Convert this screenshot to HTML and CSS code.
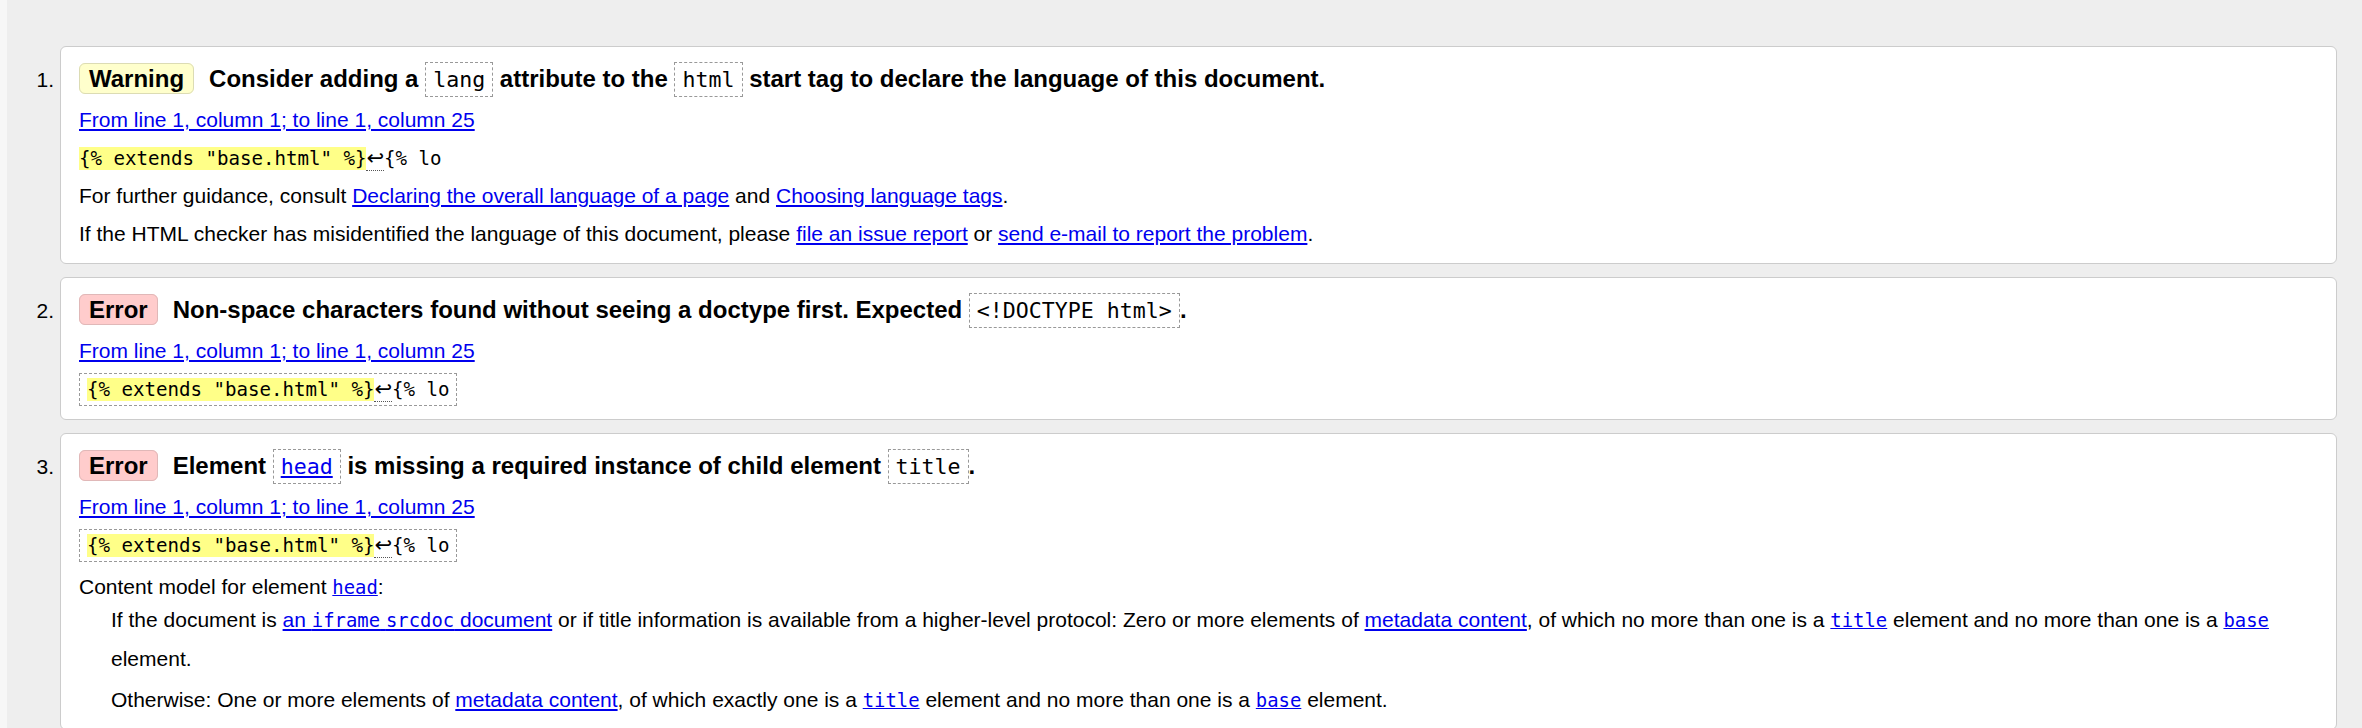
FILE: index.html
```html
<!DOCTYPE html>
<html lang="en">
<head>
<meta charset="utf-8">
<title>Messages</title>
<link rel="stylesheet" href="styles.css">
</head>
<body>
<div class="messages">
  <div class="msg">
    <span class="num">1.</span>
    <div class="card">
      <p class="head"><strong class="badge warn">Warning</strong><span>Consider adding a <code class="kw">lang</code> attribute to the <code class="kw">html</code> start tag to declare the language of this document.</span></p>
      <p class="loc"><a href="#">From line 1, column 1; to line 1, column 25</a></p>
      <p class="extract"><code><b>{% extends "base.html" %}</b><span class="lf">↩</span>{% lo</code></p>
      <p class="line">For further guidance, consult <a href="#">Declaring the overall language of a page</a> and <a href="#">Choosing language tags</a>.</p>
      <p class="line">If the HTML checker has misidentified the language of this document, please <a href="#">file an issue report</a> or <a href="#">send e-mail to report the problem</a>.</p>
    </div>
  </div>
  <div class="msg">
    <span class="num">2.</span>
    <div class="card">
      <p class="head"><strong class="badge err">Error</strong><span>Non-space characters found without seeing a doctype first. Expected <code class="kw">&lt;!DOCTYPE html&gt;</code>.</span></p>
      <p class="loc"><a href="#">From line 1, column 1; to line 1, column 25</a></p>
      <p class="extract boxed"><code><b>{% extends "base.html" %}</b><span class="lf">↩</span>{% lo</code></p>
    </div>
  </div>
  <div class="msg">
    <span class="num">3.</span>
    <div class="card">
      <p class="head"><strong class="badge err">Error</strong><span>Element <code class="kw"><a href="#">head</a></code> is missing a required instance of child element <code class="kw">title</code>.</span></p>
      <p class="loc"><a href="#">From line 1, column 1; to line 1, column 25</a></p>
      <p class="extract boxed"><code><b>{% extends "base.html" %}</b><span class="lf">↩</span>{% lo</code></p>
      <p class="cm">Content model for element <a href="#" class="m">head</a>:</p>
      <dl class="model">
        <dd>If the document is <a href="#">an <span class="m">iframe</span> <span class="m">srcdoc</span> document</a> or if title information is available from a higher-level protocol: Zero or more elements of <a href="#">metadata content</a>, of which no more than one is a <a href="#" class="m">title</a> element and no more than one is a <a href="#" class="m">base</a> element.</dd>
        <dd>Otherwise: One or more elements of <a href="#">metadata content</a>, of which exactly one is a <a href="#" class="m">title</a> element and no more than one is a <a href="#" class="m">base</a> element.</dd>
      </dl>
    </div>
  </div>
</div>
</body>
</html>
```
FILE: styles.css
```css
html {
  overflow: hidden;
}

body {
  margin: 0;
  background: #eeeeee;
  border-left: 7px solid #f7f7f7;
  font-family: "Liberation Sans", Arial, sans-serif;
  font-size: 21px;
  color: #000;
}

a {
  color: #0000ee;
}

.messages {
  display: flex;
  flex-direction: column;
  gap: 13px;
  padding: 46px 25px 0 0;
}

.msg {
  display: flex;
  align-items: baseline;
}

.num {
  flex: 0 0 53px;
  box-sizing: border-box;
  text-align: right;
  padding-right: 6px;
}

.card {
  flex: 1;
  min-width: 0;
  background: #fff;
  border: 1px solid #cccccc;
  border-radius: 6px;
  padding: 14px 18px 10px;
}

.card p {
  margin: 0;
}

.card .head {
  font-size: 24px;
  font-weight: bold;
  line-height: 36px;
}

.badge {
  padding: 1px 9px;
  border: 1px solid #d6d6c0;
  border-radius: 6px;
  margin-right: 15px;
}

.warn {
  background: #ffffcc;
  border-color: #dcdcb4;
}

.err {
  background: #ffcccc;
  border-color: #e0b8b8;
}

.kw {
  font-family: "DejaVu Sans Mono", monospace;
  font-size: 21.6px;
  font-weight: normal;
  line-height: 1;
  padding: 4px 7px;
  border: 1px dashed #999;
}

.card .loc {
  margin-top: 4px;
  line-height: 38px;
}

.card .line {
  line-height: 38px;
}

.card .extract {
  line-height: 38px;
}

.extract code {
  font-family: "DejaVu Sans Mono", monospace;
  font-size: 19.1px;
  line-height: 1;
}

.extract b {
  font-weight: normal;
  background: #ffff88;
}

.extract .lf {
  font-family: "DejaVu Sans", sans-serif;
  font-size: 21px;
  line-height: 1;
  border-bottom: 1px dotted #555;
}

.card .extract.boxed {
  line-height: normal;
  padding: 3px 0;
}

.extract.boxed code {
  display: inline-block;
  vertical-align: top;
  line-height: normal;
  padding: 4px 7px;
  border: 1px dashed #999;
}

.m {
  font-family: "DejaVu Sans Mono", monospace;
  font-size: 0.9em;
  line-height: 1;
}

.card .cm {
  margin-top: 9px;
  line-height: 26px;
}

.model {
  margin: 0;
}

.model dd {
  margin: 0 0 0 32px;
  line-height: 39.3px;
}

.model dd + dd {
  margin-top: 1.4px;
}
```
